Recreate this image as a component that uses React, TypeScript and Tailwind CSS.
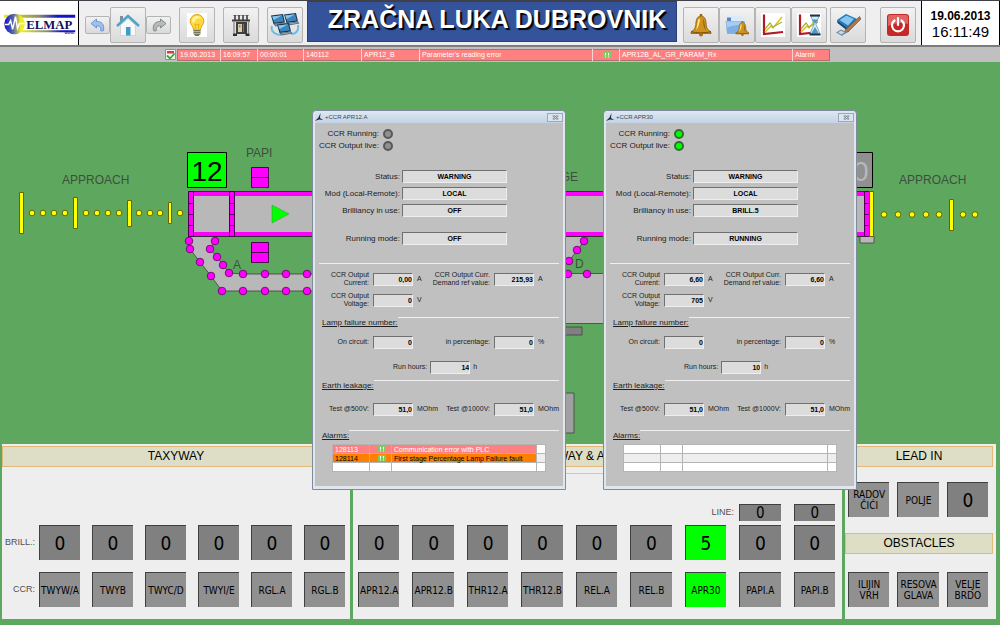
import { useId, type ReactNode } from "react";

const TAXIWAY = ["TWYW/A", "TWYB", "TWYC/D", "TWYI/E", "RGL.A", "RGL.B"];
const RUNWAY = ["APR12.A", "APR12.B", "THR12.A", "THR12.B", "REL.A", "REL.B", "APR30", "PAPI.A", "PAPI.B"];

type AlarmRow = { code: string; text: string; className: string };

type Ccr = {
  name: string;
  running: boolean;
  brilliancy: string;
  mode: string;
  current: string;
  demand: string;
  voltage: string;
  hours: string;
  alarms: AlarmRow[];
};

const APR12A: Ccr = {
  name: "APR12.A",
  running: false,
  brilliancy: "OFF",
  mode: "OFF",
  current: "0,00",
  demand: "215,93",
  voltage: "0",
  hours: "14",
  alarms: [
    { code: "128113", text: "Communication error with PLC", className: "bg-[#ff8080] text-white" },
    { code: "128114", text: "First stage Percentage Lamp Failure fault", className: "bg-[#ff8000] text-black" },
  ],
};

const APR30: Ccr = {
  name: "APR30",
  running: true,
  brilliancy: "BRILL.5",
  mode: "RUNNING",
  current: "6,60",
  demand: "6,60",
  voltage: "705",
  hours: "10",
  alarms: [],
};

/* ---------- toolbar icons ---------- */

function Logo() {
  return (
    <svg viewBox="0 0 78 46" className="h-[45px] w-full" role="img" aria-label="ELMAP d.o.o.">
      <defs>
        <linearGradient id="logo-line">
          <stop offset="0" stopColor="#f4ee20" />
          <stop offset="0.5" stopColor="#8a8a70" />
          <stop offset="0.75" stopColor="#1414c8" />
        </linearGradient>
        <linearGradient id="logo-ball">
          <stop offset="0" stopColor="#1010d0" />
          <stop offset="0.45" stopColor="#5a6aa8" />
          <stop offset="0.8" stopColor="#f0f020" />
        </linearGradient>
      </defs>
      <path d="M3 14h73v3H3z" fill="url(#logo-line)" />
      <path d="M20 30h56v2H20z" fill="url(#logo-line)" />
      <circle cx="14" cy="23.500" r="10.500" fill="url(#logo-ball)" />
      <path d="M4 24h4l2-4 2 9 3-13 2 12 2-5h5" fill="none" stroke="#fff" strokeWidth="1.500" />
      <text x="26" y="28.500" fontFamily="Liberation Serif, serif" fontWeight="700" fontSize="13" fill="#101060">
        ELMAP
      </text>
      <text x="65" y="34" fontFamily="Liberation Sans, sans-serif" fontWeight="700" fontSize="5" fill="#2020a0">
        doo.
      </text>
    </svg>
  );
}

function ArrowIcon({ flip, color }: { flip?: boolean; color: string }) {
  return (
    <svg viewBox="0 0 16 14" className="h-3.5 w-4">
      <path
        d="M1 5.500 6.500 1v2.500c5 0 8 2.500 7 9-1 .7-2 .7-3 0 .8-3-.5-4.700-4-4.700V10z"
        fill={color}
        fillOpacity="0.45"
        stroke={color}
        strokeWidth="0.900"
        strokeLinejoin="round"
        transform={flip ? "matrix(-1 0 0 1 16 0)" : undefined}
      />
    </svg>
  );
}

function HomeIcon() {
  return (
    <svg viewBox="0 0 24 24" className="h-6 w-6">
      <path d="M4.500 12v10.500h15V12L12 5.500z" fill="#f6f8fa" stroke="#c2cad0" strokeWidth="0.700" />
      <path d="M4 3h3v6H4z" fill="#7a8f9c" />
      <path d="M1 13 12 3l11 10" fill="none" stroke="#4fa6c4" strokeWidth="2.600" />
      <path d="M10 14h4.500v8.500H10z" fill="#3f9dc4" />
    </svg>
  );
}

function BulbIcon() {
  return (
    <svg viewBox="0 0 20 24" className="h-6 w-5">
      <path fill="#fff" d="M0 0h20v24H0z" />
      <path
        d="M10 1.500a6.800 6.800 0 0 1 6.800 6.800c0 3.500-3.200 4.700-3.300 8.700h-7c-.1-4-3.300-5.200-3.300-8.700A6.800 6.800 0 0 1 10 1.500z"
        fill="#ffd93b"
        stroke="#e0a010"
      />
      <path d="M5 8c0-3 2.500-5 5-5 2 0 3.500 1 4 2.500-3-1-6 0-7 4.500-1 0-2-.5-2-2z" fill="#fff3a0" />
      <path d="M8.500 16 8 11l2 1 2-1-.5 5" fill="none" stroke="#e0a010" strokeWidth="0.700" />
      <path d="M6.500 17h7v4l-2 2h-3l-2-2z" fill="#6e7a58" />
      <path d="M6.500 18.500h7M6.500 20.500h7" stroke="#c8ceb8" strokeWidth="0.700" />
    </svg>
  );
}

function TransformerIcon() {
  return (
    <svg viewBox="0 0 22 24" className="h-6 w-[22px]">
      <path d="M5 2v5M9 2v5M13 2v5M17 2v5" stroke="#333" strokeWidth="1.500" />
      <path d="M3.500 2.500h3M7.500 2.500h3M11.500 2.500h3M15.500 2.500h3" stroke="#555" />
      <path d="M2 6.500h18V8.500H2z" fill="#3c3c3c" />
      <path d="M6 9h11v12H6z" fill="#3e3e3e" />
      <path d="M4 8.500v12M18.500 8.500v12" stroke="#8a8a8a" strokeWidth="1.300" />
      <path d="M8 11h4v8H8z" fill="#d8cfae" />
      <path d="M9 12h1.500v2.500H9z" fill="#b58b30" />
      <path d="M13.500 11v8" stroke="#777" />
      <path d="M3 20.500h4v2.500H3zM15.500 20.500h4v2.500h-4z" fill="#303030" />
    </svg>
  );
}

function Screen({ x, y }: { x: number; y: number }) {
  return (
    <g transform={`translate(${x} ${y})`}>
      <path d="M0 1.500 12 0l2 8.500L2.500 10z" fill="#17354e" />
      <path d="M1.200 2.400 11.200 1.200l1.500 6.400-9.300 1.200z" fill="#3c86bd" />
      <path d="m1.200 2.400 10-1.200L2.500 6z" fill="#8cc6ea" />
      <path d="M2.500 10 14 8.500l1.500 2-11 2z" fill="#56697a" />
      <path d="m4.500 11 9-1.300" stroke="#b8c8d4" strokeWidth="0.700" />
    </g>
  );
}

function NetworkIcon() {
  return (
    <svg viewBox="0 0 30 26" className="h-[26px] w-[30px]">
      <path d="M2 14c-2 6 4 9 9 9M28 13c1 6-2 9-7 9" fill="none" stroke="#6cbbe6" strokeWidth="2" />
      <Screen x={1} y={2} />
      <Screen x={14} y={1} />
      <Screen x={7} y={11} />
    </svg>
  );
}

function BellShape() {
  return (
    <g>
      <path d="M10.800 1h2.400v3h-2.400z" fill="#9a6a10" />
      <path
        d="M12 3c4 0 5 4 5.200 8.500.2 4 1.800 5.500 4.800 7.500v1.500H2V19c3-2 4.600-3.500 4.800-7.500C7 7 8 3 12 3z"
        fill="#cf921c"
        stroke="#7c520a"
        strokeWidth="0.700"
      />
      <path d="M9.500 6c-1 2-1 7-2.500 11 2-1.500 3.500-6 4-11z" fill="#ffe98c" />
      <path d="M14.500 5.500c1 3 .8 8 2.500 11.500-2-1-3.200-6-2.500-11.500z" fill="#8f5f0e" />
      <path d="M2 18.700c6 1.500 14 1.500 20 0" fill="none" stroke="#7c520a" />
      <circle cx="12" cy="21.500" r="2" fill="#a8700f" />
    </g>
  );
}

function BellIcon() {
  return (
    <svg viewBox="0 0 24 24" className="h-6 w-6">
      <BellShape />
    </svg>
  );
}

function FolderBellIcon() {
  return (
    <svg viewBox="0 0 24 24" className="h-6 w-6">
      <path d="M2 4.500h7l1.500 2H20v14H2z" fill="#4f8ad0" />
      <path d="M6 2.500h10l4 3v9H6z" fill="#dbe9f8" />
      <path d="M.5 8h19l2 12.500H2z" fill="#7eaee4" />
      <path d="M1 8.500h18l.5 4c-6-1-12 0-17.500 2z" fill="#a8cbf0" />
      <g transform="translate(9.500 7.500) scale(.66)">
        <BellShape />
      </g>
    </svg>
  );
}

function ChartShape() {
  return (
    <g fill="none">
      <path d="M3 1.500v19.500l19-2" stroke="#b01822" strokeWidth="2.200" />
      <path d="m4 19 6-6 2 2 9-11" stroke="#e4bd18" strokeWidth="1.500" />
      <path d="m4 16 5-6 3 4 9-5" stroke="#98b43a" strokeWidth="1.200" />
    </g>
  );
}

function TrendIcon() {
  return (
    <svg viewBox="0 0 24 24" className="h-6 w-6">
      <path fill="#fff" d="M0 0h24v24H0z" />
      <ChartShape />
    </svg>
  );
}

function TrendHistoryIcon() {
  return (
    <svg viewBox="0 0 24 24" className="h-6 w-6">
      <path fill="#fff" d="M0 0h24v24H0z" />
      <ChartShape />
      <path d="M14 3h8l-3 8.500 4 9h-10l4-9z" fill="#d6ebf5" stroke="#4b7890" strokeWidth="0.600" />
      <path d="m15 6.500 6 0-3 4.500zM18 14l3.500 6h-7z" fill="#4a98c8" />
      <path d="M13 2.500h10M12.500 21.500h11" stroke="#1d3640" strokeWidth="2.200" />
    </svg>
  );
}

function NotesIcon() {
  return (
    <svg viewBox="0 0 26 24" className="h-6 w-[26px]">
      <path d="m2 7 9-6 11 5-8 10z" fill="#1f78bc" />
      <path d="m4.500 7 7-4.500 7.500 3.500-6 6.500z" fill="#86c6f0" />
      <path d="m2 7 12 9v3L2.500 10z" fill="#134a74" />
      <path d="m14 16 8-10 .5 2.500L14 19z" fill="#e4eef6" />
      <path d="M24.500 3.500 11 16l-2.500 5 5-2.500L26 6z" fill="#a87850" stroke="#6b4424" strokeWidth="0.600" />
      <path d="m1 19.500 5-3 6 2.500-5 4z" fill="#6f8ea6" />
      <path d="m3 19.500 3-1.800 3.500 1.500L6.500 21.500z" fill="#c4d8e6" />
    </svg>
  );
}

function PowerIcon() {
  return (
    <svg viewBox="0 0 22 22" className="h-[22px] w-[22px]">
      <rect width="22" height="22" rx="3" fill="#c62828" />
      <path d="M1 3a2 2 0 0 1 2-2h16a2 2 0 0 1 2 2v7C14 8 7 9 1 12z" fill="#e06464" />
      <path d="M7.500 6.500a6 6 0 1 0 7 0" fill="none" stroke="#fff" strokeWidth="2.200" strokeLinecap="round" />
      <path d="M11 4v7" stroke="#fff" strokeWidth="2.200" strokeLinecap="round" />
    </svg>
  );
}

function AckIcon() {
  return (
    <svg viewBox="0 0 8 6" className="mx-auto h-1.5 w-2">
      <path d="M0 0h8v6H0z" fill="#7ccf5c" />
      <path d="M2.500 1v2.500M5.500 1v2.500M2.500 4.500v1M5.500 4.500v1" stroke="#fff" />
    </svg>
  );
}

function ToolButton({ label, small, children }: { label: string; small?: boolean; children: ReactNode }) {
  return (
    <button
      aria-label={label}
      className={[
        "flex shrink-0 items-center justify-center rounded-[2px] border border-[#b4b4b4] bg-linear-to-b from-[#f2f2f2] to-[#dadada]",
        small ? "h-[18px] w-[25px]" : "h-9 w-9",
      ].join(" ")}
      type="button"
    >
      {children}
    </button>
  );
}

/* ---------- top of the page ---------- */

function Header() {
  return (
    <header className="flex h-[47px] border-t border-b-2 border-t-[#404048] border-b-[#7c7c7c] bg-[#efefef]">
      <div className="w-[79px] shrink-0 border-r border-black bg-white">
        <Logo />
      </div>
      <nav className="flex shrink-0 items-center gap-2 pt-1 pr-1 pl-1.5">
        <div className="flex items-center">
          <ToolButton label="Back" small>
            <ArrowIcon color="#5b8fe0" />
          </ToolButton>
          <ToolButton label="Home">
            <HomeIcon />
          </ToolButton>
          <ToolButton label="Forward" small>
            <ArrowIcon color="#7d8480" flip />
          </ToolButton>
        </div>
        <ToolButton label="Lighting">
          <BulbIcon />
        </ToolButton>
        <ToolButton label="Regulators">
          <TransformerIcon />
        </ToolButton>
        <ToolButton label="Network">
          <NetworkIcon />
        </ToolButton>
      </nav>
      <h1 className="mb-[3px] flex flex-1 items-center justify-center border border-[#2b3f75] bg-[#35539a] pb-1 pl-2.5 text-[25px] font-bold whitespace-nowrap text-white [text-shadow:2px_2px_1px_#000]">
        ZRAČNA LUKA DUBROVNIK
      </h1>
      <nav className="flex shrink-0 items-center pt-1 pr-[5px] pl-1.5">
        <ToolButton label="Alarms">
          <BellIcon />
        </ToolButton>
        <ToolButton label="Alarm archive">
          <FolderBellIcon />
        </ToolButton>
        <ToolButton label="Trends">
          <TrendIcon />
        </ToolButton>
        <ToolButton label="Trend history">
          <TrendHistoryIcon />
        </ToolButton>
        <div className="ml-[3px] flex gap-3.5">
          <ToolButton label="Notes">
            <NotesIcon />
          </ToolButton>
          <ToolButton label="Exit">
            <PowerIcon />
          </ToolButton>
        </div>
      </nav>
      <div className="w-[79px] shrink-0 border-x border-black bg-white pt-2 text-center">
        <div className="text-[12px] leading-[15px] font-bold">19.06.2013</div>
        <div className="text-[15px] leading-[15px]">16:11:49</div>
      </div>
    </header>
  );
}

function AlarmBar() {
  return (
    <div className="flex h-[15px] items-center bg-[#c0c0c0] pl-[165px]">
      <svg viewBox="0 0 11 11" className="mr-px h-[11px] w-[11px] shrink-0">
        <path d="M.5.500h10v10H.5z" fill="#f4f4f4" stroke="#909090" />
        <path d="M2 2h7v2.500H2z" fill="#d04040" />
        <path d="m2 6.500 3 3 4.500-5" fill="none" stroke="#3fa03f" strokeWidth="1.800" />
      </svg>
      <table className="w-[653px] table-fixed border-collapse border border-[#b07070] bg-[#ff8080] text-[7px] leading-[10px] text-white">
        <tbody>
          <tr className="divide-x divide-[#ffd0d0] [&>td]:pl-0.5">
            <td className="w-[43px]">19.06.2013</td>
            <td className="w-[37px]">16:09:57</td>
            <td className="w-[46px]">00:00:01</td>
            <td className="w-[58px]">140112</td>
            <td className="w-[58px]">APR12_B</td>
            <td className="w-[173px]">Parameter's reading error</td>
            <td className="w-[27px]">
              <AckIcon />
            </td>
            <td className="w-[173px]">APR12B_AL_GR_PARAM_Rx</td>
            <td>Alarmi</td>
          </tr>
        </tbody>
      </table>
    </div>
  );
}

/* ---------- airfield map ---------- */

const OUTER_A = [[189, 241], [190, 249], [200, 262], [211, 276], [222, 291], [243, 291], [265, 291], [286, 291], [307, 291]];
const INNER_A = [[215, 241], [210, 249], [217, 257], [223, 265], [229, 273], [243, 274], [265, 274], [286, 274], [307, 274]];
const TAXI_D = [[584, 241], [577, 250], [569, 261], [568, 274], [587, 274]];

function toPoints(list: number[][]) {
  return list.map((point) => point.join(",")).join(" ");
}

function AirfieldMap() {
  return (
    <svg viewBox="0 62 1000 381" className="block w-full" fontFamily="Liberation Sans, sans-serif">
      <g fill="#b8b8b8" stroke="#404040" strokeWidth="0.800">
        <polygon points={toPoints([...OUTER_A, [340, 291], [340, 274], ...[...INNER_A].reverse()])} />
        <path d="M560 236h28l-19 25-9 6z" />
        <path d="M560 273.500h52v50h-52z" />
        <path d="M860 236h14v7h-14z" />
        <path d="M550 393h24v40h-24z" fill="#a0a0a0" />
        <path d="M540 327h42v8h-42z" fill="#808080" />
      </g>
      <path d="M190 236h25v6h-25z" fill="#b8b8b8" />

      {/* runway */}
      <path d="M188.500 191.500h684v45h-684z" fill="#b8b8b8" stroke="#303030" />
      <g fill="#f0f">
        <path d="M193 192h675v4H193zM193 232h675v4H193z" />
        <g stroke="#500050">
          <path d="M188.500 191.500h5v45h-5zM188.500 203.500h5M188.500 214.500h5M188.500 225.500h5" />
          <path d="M229.500 191.500h5v45h-5zM229.500 203.500h5M229.500 214.500h5M229.500 225.500h5" />
          <path d="M864.500 191.500h5v45h-5zM864.500 203.500h5M864.500 214.500h5M864.500 225.500h5" />
          <path d="M251.500 167.500h17v20h-17zM251.500 177.500h17M251.500 242.500h17v20h-17zM251.500 252.500h17" />
        </g>
      </g>
      <path d="M869.500 191.500h4v45h-4z" fill="#ff0" stroke="#666600" />
      <path d="m272 205 17 9-17 9z" fill="#0f0" stroke="#409040" strokeWidth="0.500" />
      <g fill="#f0f" stroke="#600060" strokeWidth="0.800">
        {[...OUTER_A, ...INNER_A, ...TAXI_D].map(([x, y]) => (
          <circle key={`${x}-${y}`} cx={x} cy={y} r="3.800" />
        ))}
      </g>

      {/* approach lights */}
      <g fill="#ff0" stroke="#666600">
        <path d="M19.500 192.500h4v41h-4zM73.500 197.500h4v31h-4zM127.500 200.500h4v26h-4zM168.500 202.500h3v21h-3zM949.500 199.500h4v31h-4z" />
        {[32, 43, 54, 65, 86, 97, 108, 119, 139, 150, 160, 180].map((x) => (
          <circle key={x} cx={x} cy="213" r="2.800" />
        ))}
        {[884, 898, 912, 926, 939, 963, 975].map((x) => (
          <circle key={x} cx={x} cy="214.500" r="2.800" />
        ))}
      </g>

      <path d="M187.500 152.500h39v35h-39z" fill="#0f0" stroke="#000" />
      <text x="207" y="180.500" fontSize="28" textAnchor="middle">
        12
      </text>
      <path d="M833.500 152.500h39v35h-39z" fill="#909090" stroke="#000" />
      <text x="853" y="180.500" fontSize="28" textAnchor="middle" fill="#b8b8b8">
        30
      </text>

      <g fontSize="12" fill="#3d4f3d">
        <text x="62" y="184">APPROACH</text>
        <text x="899" y="184">APPROACH</text>
        <text x="246" y="157">PAPI</text>
        <text x="233" y="269">A</text>
        <text x="575" y="268">D</text>
        <text x="578" y="181" textAnchor="end">EDGE</text>
      </g>
    </svg>
  );
}

/* ---------- regulator window ---------- */

function Field({
  label,
  value,
  labelClass,
  fieldClass,
}: {
  label: ReactNode;
  value: string;
  labelClass: string;
  fieldClass: string;
}) {
  const id = useId();

  return (
    <>
      <label className={["text-right whitespace-nowrap", labelClass].join(" ")} htmlFor={id}>
        {label}
      </label>
      <input
        className={[
          "h-[13px] min-w-0 border border-t-[#707070] border-r-[#eee] border-b-[#eee] border-l-[#707070] bg-[#dcdcdc] text-[7px] leading-[11px] font-bold text-black outline-none",
          fieldClass,
        ].join(" ")}
        id={id}
        readOnly
        value={value}
      />
    </>
  );
}

function StateRow({ label, value }: { label: string; value: string }) {
  return (
    <div className="flex items-center gap-0.5">
      <Field label={label} value={value} labelClass="w-[85px]" fieldClass="w-[105px] text-center" />
    </div>
  );
}

function Measure({ label, value, unit }: { label: ReactNode; value: string; unit: string }) {
  return (
    <>
      <Field label={label} value={value} labelClass="justify-self-end" fieldClass="w-10 text-right" />
      <span>{unit}</span>
    </>
  );
}

function MeasureRow({ className, children }: { className: string; children: ReactNode }) {
  return (
    <div
      className={[
        "grid h-4 grid-cols-[54px_40px_8px_61px_40px_1fr] items-center gap-x-1 text-[7px] leading-[8px] whitespace-nowrap",
        className,
      ].join(" ")}
    >
      {children}
    </div>
  );
}

function Lamp({ label, on }: { label: string; on: boolean }) {
  return (
    <div className="flex h-3 items-center gap-1">
      <span className="w-16 text-right whitespace-nowrap">{label}</span>
      <span
        className={[
          "h-2.5 w-2.5 rounded-full border-2",
          on ? "border-[#2f6f2f] bg-[#00ff00]" : "border-[#585858] bg-[#909090]",
        ].join(" ")}
      />
    </div>
  );
}

function SectionTitle({ className, children }: { className: string; children: ReactNode }) {
  return (
    <div className={["mr-1 ml-[7px] flex h-3 items-start", className].join(" ")}>
      <h3 className="leading-[12px] underline">{children}</h3>
      <hr className="flex-1 border-[#f0f0f0]" />
    </div>
  );
}

function CcrWindow({ ccr, className }: { ccr: Ccr; className: string }) {
  const rows = [0, 1, 2].map((index) => ccr.alarms[index]);

  return (
    <section
      className={[
        "absolute top-12 z-10 h-[380px] w-[254px] rounded-t-[4px] border border-[#7f8b99] bg-[#dfe6ee] px-0.5 text-[8px] text-[#202020]",
        className,
      ].join(" ")}
    >
      <div className="flex h-3 items-center gap-0.5 bg-linear-to-b from-[#dce8f4] to-[#c3d3e4]">
        <svg viewBox="0 0 8 8" className="h-2 w-2">
          <path d="M5.500 0 5 5l3 2-4-.5L0 8l3.500-3.500z" fill="#202830" />
        </svg>
        <h2 className="text-[6px] text-[#3a4856]">+CCR {ccr.name}</h2>
        <button
          aria-label="Close"
          className="ml-auto flex h-[9px] w-4 items-center justify-center border border-[#9aa8b8] bg-[#dbe5ef]"
          type="button"
        >
          <svg viewBox="0 0 7 5" className="h-[5px] w-[7px]">
            <path d="m1 .5 5 4M6 .5l-5 4" stroke="#6a7684" strokeWidth="1.800" />
            <path d="m1 .5 5 4M6 .5l-5 4" stroke="#fff" strokeWidth="0.600" />
          </svg>
        </button>
      </div>

      <div className="h-[363px] bg-[#c0c0c0] pt-[5px]">
        <Lamp label="CCR Running:" on={ccr.running} />
        <Lamp label="CCR Output live:" on={ccr.running} />

        <div className="mt-[18px] space-y-1">
          <StateRow label="Status:" value="WARNING" />
          <StateRow label="Mod (Local-Remote):" value="LOCAL" />
          <StateRow label="Brilliancy in use:" value={ccr.brilliancy} />
        </div>
        <div className="mt-[15px]">
          <StateRow label="Running mode:" value={ccr.mode} />
        </div>

        <hr className="mx-1 mt-[18px] border-[#f0f0f0]" />

        <MeasureRow className="mt-[7px]">
          <Measure label={<>CCR Output<br />Current:</>} value={ccr.current} unit="A" />
          <Measure label={<>CCR Output Curr.<br />Demand ref value:</>} value={ccr.demand} unit="A" />
        </MeasureRow>
        <MeasureRow className="mt-[5px]">
          <Measure label={<>CCR Output<br />Voltage:</>} value={ccr.voltage} unit="V" />
        </MeasureRow>

        <SectionTitle className="mt-[9px]">Lamp failure number:</SectionTitle>
        <MeasureRow className="mt-[5px]">
          <Measure label="On circuit:" value="0" unit="" />
          <Measure label="in percentage:" value="0" unit="%" />
        </MeasureRow>
        <div className="mt-[9px] flex h-4 items-center gap-[3px] pl-[78px] text-[7px]">
          <Measure label="Run hours:" value={ccr.hours} unit="h" />
        </div>

        <SectionTitle className="mt-[5px]">Earth leakage:</SectionTitle>
        <MeasureRow className="mt-[9px]">
          <Measure label="Test @500V:" value="51,0" unit="MOhm" />
          <Measure label="Test @1000V:" value="51,0" unit="MOhm" />
        </MeasureRow>

        <SectionTitle className="mt-[13px]">Alarms:</SectionTitle>
        <table className="mt-0.5 ml-[17px] w-[214px] table-fixed border-collapse text-[7px] leading-[7px]">
          <tbody>
            {rows.map((row, index) => (
              <tr
                className={[
                  "h-[9px] [&>td]:border [&>td]:border-[#b4b4b4] [&>td]:py-0 [&>td]:pl-0.5",
                  index === 1 ? "bg-[#eee]" : "bg-white",
                ].join(" ")}
                key={index}
              >
                <td className={["w-[37px]", row?.className].join(" ")}>{row?.code}</td>
                <td className={["w-[22px]", row?.className].join(" ")}>{row && <AckIcon />}</td>
                <td className={["w-[145px] whitespace-nowrap", row?.className].join(" ")}>{row?.text}</td>
                <td />
              </tr>
            ))}
          </tbody>
        </table>
      </div>
    </section>
  );
}

/* ---------- control panels ---------- */

function Tile({ kind, active, children }: { kind: "level" | "line" | "name"; active?: boolean; children: ReactNode }) {
  return (
    <button
      className={[
        "flex min-w-0 items-center justify-center border-t border-l border-[#404040] text-center font-['DejaVu_Sans_Condensed','DejaVu_Sans',sans-serif] text-black",
        kind === "level" ? "h-[35px] text-[19px]" : "",
        kind === "line" ? "h-[17px] text-[15px] leading-[15px]" : "",
        kind === "name" ? "h-[35px] text-[10px] leading-[11px]" : "",
        active ? "bg-[#00ff00]" : kind === "name" ? "bg-[#909090]" : "bg-[#808080]",
      ].join(" ")}
      type="button"
    >
      {children}
    </button>
  );
}

function PanelTitle({ children }: { children: ReactNode }) {
  return (
    <h2 className="h-[21px] border border-[#e2b878] bg-[#dedec6] text-center text-[12px] leading-[19px] text-black">
      {children}
    </h2>
  );
}

function ControlPanels() {
  return (
    <main className="grid grid-cols-[348fr_489fr_151fr] gap-[3px] pr-1 pb-1.5 pl-0.5 text-[9px] text-[#505050]">
      <section className="flex flex-col bg-[#eee] pt-0.5 pb-3">
        <PanelTitle>TAXYWAY</PanelTitle>
        <div className="mt-auto grid grid-cols-[25px_repeat(6,minmax(0,1fr))] items-center gap-3 pr-[5px]">
          <span className="-mr-2 text-right whitespace-nowrap">BRILL.:</span>
          {TAXIWAY.map((name) => (
            <Tile key={name} kind="level">
              0
            </Tile>
          ))}
          <span className="-mr-2 text-right whitespace-nowrap">CCR:</span>
          {TAXIWAY.map((name) => (
            <Tile key={name} kind="name">
              {name}
            </Tile>
          ))}
        </div>
      </section>

      <section className="flex flex-col bg-[#eee] pt-0.5 pb-3">
        <PanelTitle>RUNWAY &amp; APPROACH</PanelTitle>
        <hr className="mt-1.5 border-[#c4c8d4]" />
        <div className="mt-auto grid grid-cols-9 items-center gap-x-[13px] gap-y-3 pr-[7px] pl-[5px]">
          <span className="col-span-7 -mr-2 -mb-2 text-right">LINE:</span>
          <div className="-mb-2 grid">
            <Tile kind="line">0</Tile>
          </div>
          <div className="-mb-2 grid">
            <Tile kind="line">0</Tile>
          </div>
          {RUNWAY.map((name) => (
            <Tile active={name === "APR30"} key={name} kind="level">
              {name === "APR30" ? "5" : "0"}
            </Tile>
          ))}
          {RUNWAY.map((name) => (
            <Tile active={name === "APR30"} key={name} kind="name">
              {name}
            </Tile>
          ))}
        </div>
      </section>

      <section className="bg-[#eee] pt-0.5 pb-3">
        <div className="mr-[3px]">
          <PanelTitle>LEAD IN</PanelTitle>
        </div>
        <div className="mt-[15px] grid grid-cols-3 gap-2 pr-2 pl-[3px]">
          <Tile kind="name">RADOV ČIĆI</Tile>
          <Tile kind="name">POLJE</Tile>
          <Tile kind="level">0</Tile>
        </div>
        <div className="mt-4 mr-[3px]">
          <PanelTitle>OBSTACLES</PanelTitle>
        </div>
        <div className="mt-[18px] grid grid-cols-3 gap-2 pr-2 pl-[3px]">
          <Tile kind="name">ILIJIN VRH</Tile>
          <Tile kind="name">RESOVA GLAVA</Tile>
          <Tile kind="name">VELJE BRDO</Tile>
        </div>
      </section>
    </main>
  );
}

export default function App() {
  return (
    <div className="min-h-screen bg-[#5da85e] font-['Liberation_Sans',Arial,sans-serif] text-black">
      <Header />
      <AlarmBar />
      <div className="relative pb-px">
        <AirfieldMap />
        <CcrWindow ccr={APR12A} className="left-[312px]" />
        <CcrWindow ccr={APR30} className="left-[603px]" />
      </div>
      <ControlPanels />
    </div>
  );
}
